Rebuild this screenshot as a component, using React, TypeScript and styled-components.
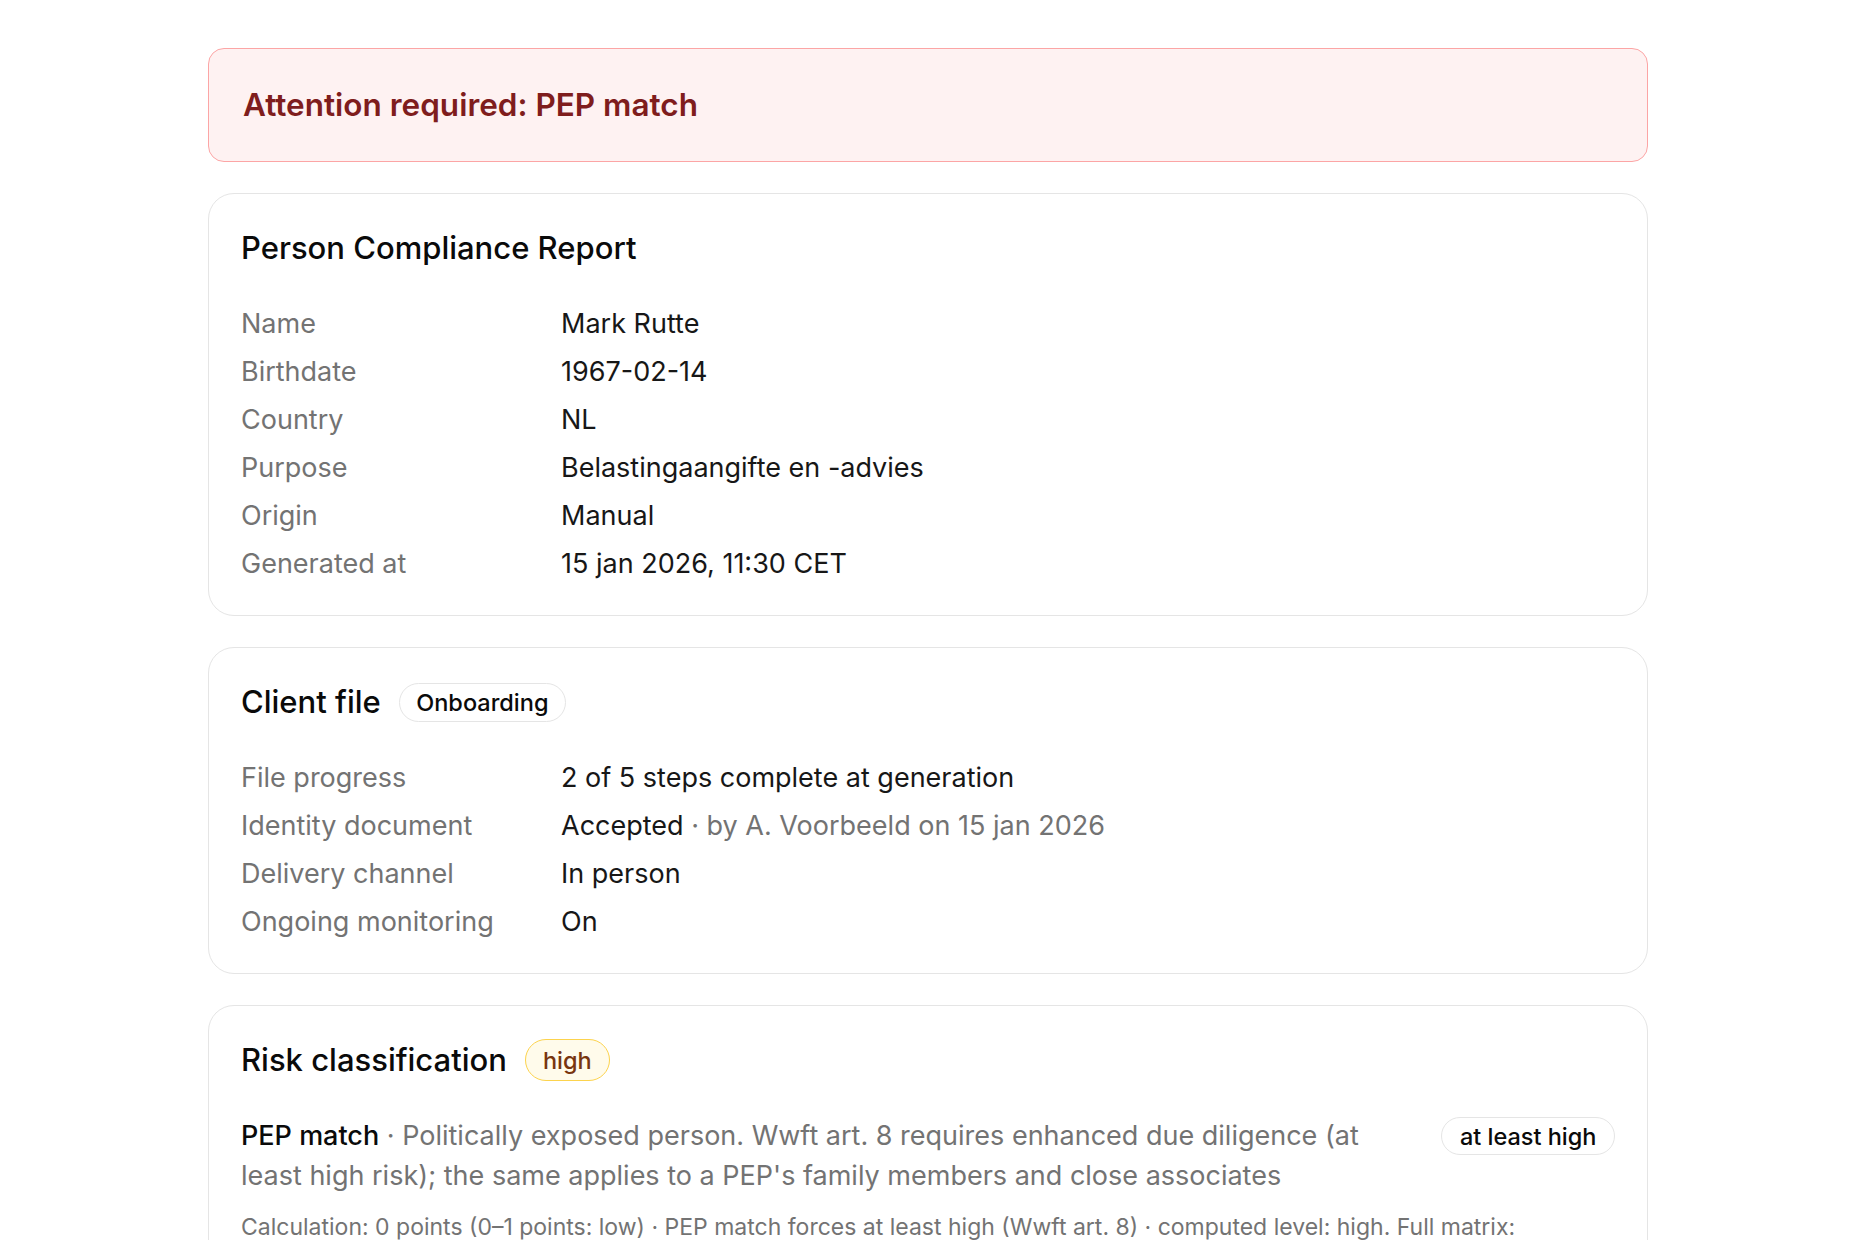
import React from 'react';
import styled, { createGlobalStyle, css } from 'styled-components';

const GlobalStyle = createGlobalStyle`
  html, body {
    margin: 0;
    padding: 0;
    background: #ffffff;
  }
  body {
    font-family: Inter, "Noto Sans", "Liberation Sans", sans-serif;
    color: #171717;
    -webkit-font-smoothing: antialiased;
  }
  * {
    box-sizing: border-box;
  }
`;

const Page = styled.main`
  width: 1440px;
  margin: 0 auto;
  padding: 48px 0 64px;
  display: flex;
  flex-direction: column;
  gap: 31px;
`;

const Alert = styled.section`
  background: #fef2f2;
  border: 1.5px solid #fca5a5;
  border-radius: 16px;
  padding: 34px 34px;
`;

const AlertTitle = styled.h2`
  margin: 0;
  font-size: 31.5px;
  line-height: 44px;
  font-weight: 600;
  color: #7f1d1d;
`;

const Card = styled.section`
  border: 1.5px solid #e5e5e5;
  border-radius: 26px;
  padding: 33px 32px;
  display: flex;
  flex-direction: column;
  gap: 37px;
  background: #ffffff;
`;

const CardHeader = styled.div`
  display: flex;
  align-items: center;
  gap: 18px;
  min-height: 42px;
`;

const CardTitle = styled.h3`
  margin: 0;
  font-size: 31px;
  line-height: 42px;
  font-weight: 500;
  color: #0a0a0a;
`;

const Pill = styled.span<{ $tone?: 'neutral' | 'warn'; $small?: boolean }>`
  display: inline-flex;
  align-items: center;
  flex-shrink: 0;
  height: 39px;
  padding: 0 16.5px;
  border-radius: 999px;
  border: 1.5px solid #e5e5e5;
  background: #ffffff;
  color: #0a0a0a;
  font-size: 23.5px;
  font-weight: 500;
  white-space: nowrap;

  ${({ $tone }) =>
    $tone === 'warn' &&
    css`
      height: 42px;
      padding: 0 17px;
      background: #fffbeb;
      border-color: #fcd34d;
      color: #78350f;
    `}

  ${({ $small }) =>
    $small &&
    css`
      height: 38px;
      padding: 0 17.5px;
      margin-top: 1px;
    `}
`;

const Details = styled.div`
  display: grid;
  grid-template-columns: 320px 1fr;
  row-gap: 12px;
  font-size: 27px;
  line-height: 36px;
`;

const Label = styled.div`
  color: #737373;
`;

const Value = styled.div`
  color: #171717;
`;

const Muted = styled.span`
  color: #737373;
`;

const RiskBody = styled.div`
  display: flex;
  flex-direction: column;
  gap: 16px;
  margin-top: -2px;
`;

const FactorRow = styled.div`
  display: flex;
  align-items: flex-start;
  justify-content: space-between;
  gap: 52px;
`;

const FactorText = styled.p`
  margin: 0;
  font-size: 27px;
  line-height: 40px;
  color: #737373;
`;

const FactorName = styled.span`
  color: #0a0a0a;
  font-weight: 500;
`;

const Calculation = styled.p`
  margin: 0;
  font-size: 23px;
  line-height: 30px;
  color: #737373;
`;

type Row = { label: string; value: React.ReactNode };

const reportRows: Row[] = [
  { label: 'Name', value: 'Mark Rutte' },
  { label: 'Birthdate', value: '1967-02-14' },
  { label: 'Country', value: 'NL' },
  { label: 'Purpose', value: 'Belastingaangifte en -advies' },
  { label: 'Origin', value: 'Manual' },
  { label: 'Generated at', value: '15 jan 2026, 11:30 CET' },
];

const fileRows: Row[] = [
  { label: 'File progress', value: '2 of 5 steps complete at generation' },
  {
    label: 'Identity document',
    value: (
      <>
        Accepted<Muted> · by A. Voorbeeld on 15 jan 2026</Muted>
      </>
    ),
  },
  { label: 'Delivery channel', value: 'In person' },
  { label: 'Ongoing monitoring', value: 'On' },
];

const DetailList: React.FC<{ rows: Row[] }> = ({ rows }) => (
  <Details>
    {rows.map((row) => (
      <React.Fragment key={row.label}>
        <Label>{row.label}</Label>
        <Value>{row.value}</Value>
      </React.Fragment>
    ))}
  </Details>
);

const App: React.FC = () => {
  return (
    <>
      <GlobalStyle />
      <Page>
        <Alert>
          <AlertTitle>Attention required: PEP match</AlertTitle>
        </Alert>

        <Card>
          <CardHeader>
            <CardTitle>Person Compliance Report</CardTitle>
          </CardHeader>
          <DetailList rows={reportRows} />
        </Card>

        <Card>
          <CardHeader>
            <CardTitle>Client file</CardTitle>
            <Pill>Onboarding</Pill>
          </CardHeader>
          <DetailList rows={fileRows} />
        </Card>

        <Card>
          <CardHeader>
            <CardTitle>Risk classification</CardTitle>
            <Pill $tone="warn">high</Pill>
          </CardHeader>
          <RiskBody>
            <FactorRow>
              <FactorText>
                <FactorName>PEP match</FactorName> · Politically exposed person. Wwft art. 8
                requires enhanced due diligence (at least high risk); the same applies to a
                PEP's family members and close associates
              </FactorText>
              <Pill $small>at least high</Pill>
            </FactorRow>
            <Calculation>
              Calculation: 0 points (0–1 points: low) · PEP match forces at least high (Wwft
              art. 8) · computed level: high. Full matrix:
            </Calculation>
          </RiskBody>
        </Card>
      </Page>
    </>
  );
};

export default App;
